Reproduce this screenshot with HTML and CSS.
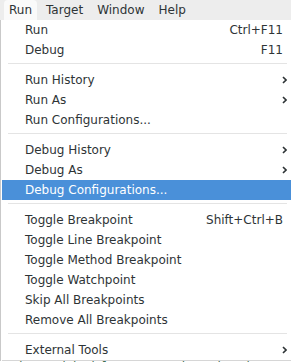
FILE: index.html
```html
<!DOCTYPE html>
<html lang="en">
<head>
    <meta charset="UTF-8">
    <title>Run menu</title>
    <link rel="stylesheet" href="styles.css">
</head>
<body>
    <div id="menubar">
        <span class="top active">Run</span>
        <span class="top">Target</span>
        <span class="top">Window</span>
        <span class="top">Help</span>
    </div>
    <div id="frame">
        <div id="edge"></div>
        <div id="menu">
            <div class="item"><span>Run</span><span class="key">Ctrl+F11</span></div>
            <div class="item"><span>Debug</span><span class="key">F11</span></div>
            <div class="sep"></div>
            <div class="item"><span>Run History</span><svg class="arrow" viewBox="0 0 5 8"><path d="M1 1 L4 4 L1 7"/></svg></div>
            <div class="item"><span>Run As</span><svg class="arrow" viewBox="0 0 5 8"><path d="M1 1 L4 4 L1 7"/></svg></div>
            <div class="item"><span>Run Configurations...</span></div>
            <div class="sep"></div>
            <div class="item"><span>Debug History</span><svg class="arrow" viewBox="0 0 5 8"><path d="M1 1 L4 4 L1 7"/></svg></div>
            <div class="item"><span>Debug As</span><svg class="arrow" viewBox="0 0 5 8"><path d="M1 1 L4 4 L1 7"/></svg></div>
            <div class="item selected"><span>Debug Configurations...</span></div>
            <div class="sep"></div>
            <div class="item"><span>Toggle Breakpoint</span><span class="key">Shift+Ctrl+B</span></div>
            <div class="item"><span>Toggle Line Breakpoint</span></div>
            <div class="item"><span>Toggle Method Breakpoint</span></div>
            <div class="item"><span>Toggle Watchpoint</span></div>
            <div class="item"><span>Skip All Breakpoints</span></div>
            <div class="item"><span>Remove All Breakpoints</span></div>
            <div class="sep"></div>
            <div class="item"><span>External Tools</span><svg class="arrow" viewBox="0 0 5 8"><path d="M1 1 L4 4 L1 7"/></svg></div>
        </div>
    </div>
    <div id="under">ad. Kasd hadal sommussaskana has bass</div>
</body>
</html>
```

FILE: styles.css
```css
body {
    margin: 0;
    width: 291px;
    height: 362px;
    overflow: hidden;
    background: #fff;
    font-family: "DejaVu Sans", sans-serif;
    font-size: 12px;
    color: #2e3436;
}

#menubar {
    display: flex;
    height: 20px;
    background: #ededed;
    padding-left: 4px;
}
.top {
    line-height: 20px;
    padding: 0 5px;
    margin-right: 4px;
}
.top.active {
    background: #fafafa;
    border-radius: 4px 4px 0 0;
}

#frame { display: flex; }
#edge {
    width: 1px;
    margin-right: 1px;
    background: #c9c9c9;
}
#menu {
    flex: 1;
    background: #fff;
    border-bottom: 1px solid #d6d6d6;
}

.item {
    display: flex;
    align-items: center;
    justify-content: space-between;
    height: 20px;
    padding: 0 8px 0 23px;
    white-space: nowrap;
}
.item.selected {
    background: #4a90d9;
    color: #fff;
}
.key { color: #2e3436; }
.arrow {
    width: 5px;
    height: 8px;
    margin-right: -4px;
    fill: none;
    stroke: #2e3436;
    stroke-width: 1.6;
}

.sep {
    height: 10px;
    display: flex;
    align-items: flex-start;
}
.sep::after {
    content: "";
    flex: 1;
    margin: 3px 4px 0 6px;
    height: 1px;
    background: #e4e4e4;
}

#under {
    height: 4px;
    overflow: hidden;
    padding-left: 8px;
    font-family: "DejaVu Sans Mono", monospace;
    font-size: 12px;
    line-height: 12px;
    color: #3f6f4f;
}
```
